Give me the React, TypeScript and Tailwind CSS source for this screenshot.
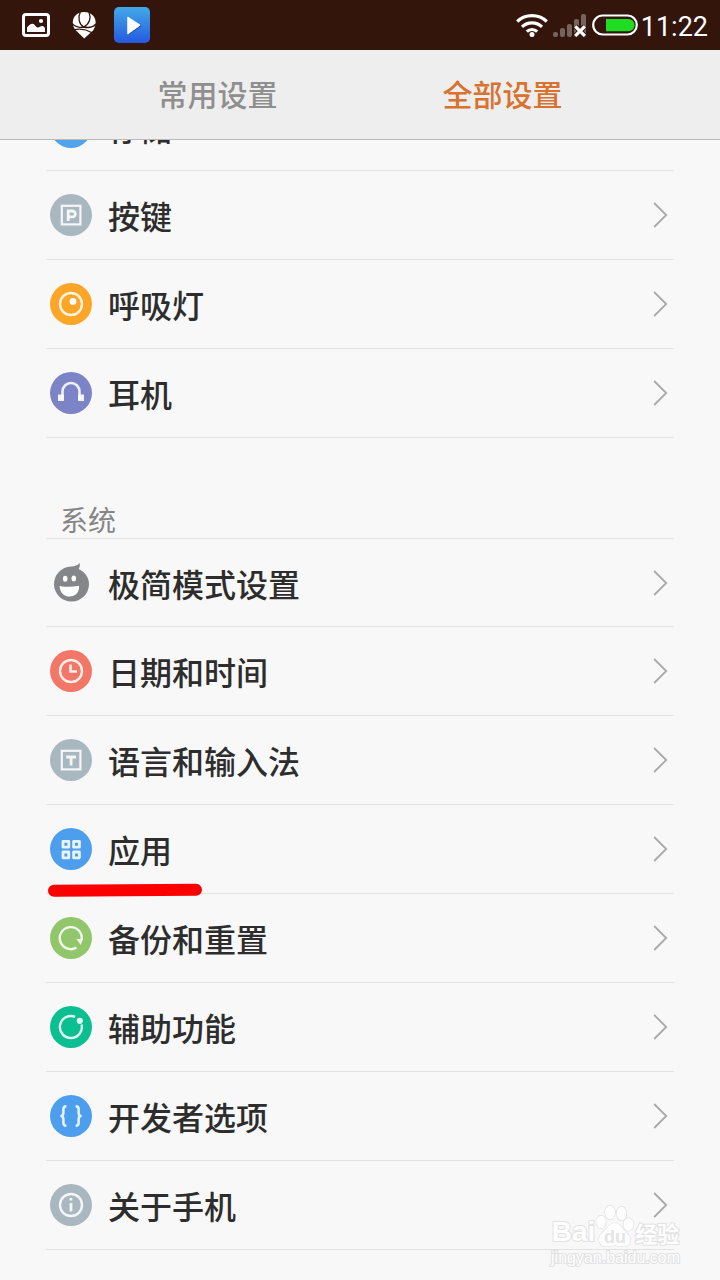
import type { ReactNode } from 'react'

type Item = {
  id: string
  label: string
  icon: ReactNode
  marked?: boolean
}

function Disc({ color, children }: { color: string; children?: ReactNode }) {
  return (
    <svg width="42" height="42" viewBox="0 0 42 42" fill="none" stroke="#fff" strokeOpacity="0.88" aria-hidden="true">
      <circle cx="21" cy="21" r="21" fill={color} stroke="none" />
      {children}
    </svg>
  )
}

const deviceItems: Item[] = [
  { id: 'storage', label: '存储', icon: <Disc color="#52a4ea" /> },
  {
    id: 'keys',
    label: '按键',
    icon: (
      <Disc color="#a9b7c1">
        <rect x="11.8" y="11.8" width="18.6" height="18.6" strokeWidth="2.2" />
        <path d="M18.2 27V17h4.2a2.9 2.9 0 0 1 0 5.9h-4" strokeWidth="2.8" />
      </Disc>
    ),
  },
  {
    id: 'light',
    label: '呼吸灯',
    icon: (
      <Disc color="#fba626">
        <circle cx="21" cy="21" r="11" strokeWidth="2.4" />
        <circle cx="23" cy="18.4" r="3.4" fill="#fff" stroke="none" />
      </Disc>
    ),
  },
  {
    id: 'headset',
    label: '耳机',
    icon: (
      <Disc color="#7c83c6">
        <path d="M12.5 28.4V19.5a8.5 8.5 0 0 1 17 0v8.9" strokeWidth="2.6" />
        <path d="M8 22.6h3V29H8zM11.2 22.6h2.6V29h-2.6zM28.2 22.6h2.6V29h-2.6zM31 22.6h3V29h-3z" fill="#fff" fillOpacity="0.9" stroke="none" />
      </Disc>
    ),
  },
]

const systemItems: Item[] = [
  {
    id: 'simple',
    label: '极简模式设置',
    icon: (
      <svg width="42" height="42" viewBox="0 0 42 42" aria-hidden="true">
        <path d="M29.6 1c.6 2.6 0 4.6-.9 6C34.6 9.7 39 15.3 39 22A17.500 17.500 0 1 1 21 4.600c4-.1 6.800-1.300 8.600-3.600z" fill="#848689" />
        <ellipse cx="15.2" cy="16.8" rx="2.300" ry="3" fill="#fff" />
        <ellipse cx="23.800" cy="16.600" rx="2.300" ry="3" fill="#fff" />
        <path d="M9.600 23.900c6.200 1.200 12.800 1.200 19.400-.2.800 6.400-3.600 10.700-9.300 10.800-5.500.1-9.900-4.100-10.100-10.600z" fill="#fff" />
      </svg>
    ),
  },
  {
    id: 'date',
    label: '日期和时间',
    icon: (
      <Disc color="#f27766">
        <circle cx="21" cy="21" r="11" strokeWidth="2.4" />
        <path d="M20.500 14.500v7h6.500" strokeWidth="2.600" />
      </Disc>
    ),
  },
  {
    id: 'language',
    label: '语言和输入法',
    icon: (
      <Disc color="#a9b7c1">
        <rect x="11.8" y="11.8" width="18.6" height="18.6" strokeWidth="2.2" />
        <path d="M16.200 18h9.800M21.100 18v8.400" strokeWidth="2.800" />
      </Disc>
    ),
  },
  {
    id: 'apps',
    label: '应用',
    marked: true,
    icon: (
      <Disc color="#4d9fee">
        <g strokeWidth="2.800" strokeLinejoin="round">
          <rect x="13" y="13.400" width="5.800" height="5.800" />
          <rect x="23.600" y="13.400" width="5.800" height="5.800" />
          <rect x="13" y="24" width="5.800" height="5.800" />
          <rect x="23.600" y="24" width="5.800" height="5.800" />
        </g>
      </Disc>
    ),
  },
  {
    id: 'backup',
    label: '备份和重置',
    icon: (
      <Disc color="#91c66b">
        <path d="M26.500 30.500A11 11 0 1 1 31.600 23" strokeWidth="2.400" />
        <path d="M26.200 21.800l6.600.4-2 5.800z" fill="#fff" fillOpacity="0.880" stroke="none" />
      </Disc>
    ),
  },
  {
    id: 'access',
    label: '辅助功能',
    icon: (
      <Disc color="#0cbf91">
        <path d="M25.200 10.900A11 11 0 1 0 31.600 18.500" strokeWidth="2.400" />
        <circle cx="29.800" cy="14.800" r="3.100" fill="#fff" fillOpacity="0.880" stroke="none" />
      </Disc>
    ),
  },
  {
    id: 'developer',
    label: '开发者选项',
    icon: (
      <Disc color="#4d9fee">
        <path d="M16.400 11.200c-2.200 0-3 .9-3 2.800v3.600c0 1.700-.5 2.900-1.900 3.400 1.400.5 1.900 1.700 1.900 3.400V28c0 1.900.8 2.800 3 2.800M25.600 11.200c2.200 0 3 .9 3 2.800v3.600c0 1.700.5 2.900 1.900 3.400-1.400.5-1.900 1.700-1.900 3.400V28c0 1.900-.8 2.800-3 2.800" strokeWidth="2.500" strokeLinejoin="round" />
      </Disc>
    ),
  },
  {
    id: 'about',
    label: '关于手机',
    icon: (
      <Disc color="#a9b7c1">
        <circle cx="21" cy="21" r="11" strokeWidth="2.4" />
        <path d="M21 14v2.600M21 19v8.500" strokeWidth="2.800" />
      </Disc>
    ),
  },
]

function StatusBar() {
  return (
    <div className="flex h-[50px] items-center justify-between bg-[#33150c] pl-[21px] pr-3">
      <div className="flex items-center gap-5">
        <svg width="30" height="26" viewBox="0 0 30 26" aria-hidden="true">
          <rect x="2.500" y="2.500" width="25" height="21" rx="2.500" fill="none" stroke="#fff" strokeWidth="3" />
          <path d="M6 20v-4.500c2-2.800 4-4 5.600-3.800 2.200.2 3 3.400 5 3.800 1.600.3 3-1.700 4.700-1.500 1.300.1 2.200 1.100 2.700 2.200V20z" fill="#fff" />
          <circle cx="20" cy="9" r="2.100" fill="#fff" />
        </svg>
        <svg width="26" height="28" viewBox="0 0 26 28" aria-hidden="true">
          <path d="M13 1C19.800 1 24.600 5.500 24.600 11.500c0 3.200-1.200 5.500-2.600 8L13.200 27.500 5 19.600C2.900 17.200 1.800 14.500 1.800 11.500 1.800 5.500 6.500 1 13 1z" fill="#fff" />
          <path d="M9.300 1C6.500 6.500 8 13.300 12.800 16M18 1.500c2.500 5.500.3 11.800-5.200 14.500M1 12.500c3.500 3.400 7.500 4.600 11.800 3.500M12.800 16c5 1.200 9.200.2 12-3M2.500 19c6-1.700 12.500-.8 18.500 2.700" fill="none" stroke="#33150c" strokeWidth="1.300" />
        </svg>
        <svg width="36" height="36" viewBox="0 0 36 36" className="-ml-[3px]" aria-hidden="true">
          <defs>
            <linearGradient id="player" x1="0" y1="0" x2="0" y2="1">
              <stop offset="0" stopColor="#44a9e8" />
              <stop offset="1" stopColor="#2459e0" />
            </linearGradient>
          </defs>
          <rect width="36" height="36" rx="5" fill="url(#player)" />
          <path d="M15 11.500l12.500 7.700-12.500 8.600z" fill="#1c55bd" />
          <path d="M14 10.500l11.500 7.700L14 26.500z" fill="#fff" stroke="#fff" strokeWidth="1.500" strokeLinejoin="round" />
        </svg>
      </div>
      <div className="flex items-center gap-[5px]">
        <svg width="32" height="26" viewBox="0 0 32 26" fill="none" stroke="#fff" strokeWidth="3.200" aria-hidden="true">
          <path d="M1.200 9.500a21.500 21.500 0 0 1 29.600 0M6 14.800a14.500 14.500 0 0 1 20 0M10.800 19.600a7.500 7.500 0 0 1 10.400 0" />
          <circle cx="16" cy="22.600" r="2.500" fill="#fff" stroke="none" />
        </svg>
        <svg width="34" height="24" viewBox="0 0 34 24" aria-hidden="true">
          <g fill="#75635d">
            <rect x="0" y="19" width="5" height="5" rx="2" />
            <rect x="7" y="15" width="5" height="9" rx="2" />
            <rect x="14" y="11" width="5" height="13" rx="2" />
            <rect x="21" y="6" width="5" height="18" rx="2" />
            <rect x="28" y="1" width="5" height="23" rx="2" />
          </g>
          <path d="M22.300 13.300l9.500 9.500M31.800 13.300l-9.500 9.500" stroke="#33150c" strokeWidth="5" />
          <path d="M22.300 13.300l9.500 9.500M31.800 13.300l-9.500 9.500" stroke="#fff" strokeWidth="3.200" />
        </svg>
        <svg width="46" height="24" viewBox="0 0 46 24" aria-hidden="true">
          <rect x="1.200" y="2.500" width="43.600" height="19" rx="9.500" fill="none" stroke="#fff" strokeWidth="2.200" />
          <path d="M14 6h22.500a6 6 0 0 1 0 12.200H14z" fill="#1fdd22" />
        </svg>
        <time className="-ml-[2px] pt-1 font-[Roboto,sans-serif] text-[27px] leading-8 text-white">11:22</time>
      </div>
    </div>
  )
}

function SettingRow({ item }: { item: Item }) {
  return (
    <li className="relative h-[89px] border-b border-[#e2e2e2] first:border-t">
      <a href={`#${item.id}`} className="flex h-full items-center gap-4 pl-1 pr-[6px]">
        {item.icon}
        <span className="flex-1 text-[32px] font-medium leading-10 text-[#2d2d2d]">{item.label}</span>
        <svg width="15" height="26" viewBox="0 0 15 26" fill="none" stroke="#a9a9a9" strokeWidth="1.800" aria-hidden="true">
          <path d="M1.200 1l12 12-12 12" />
        </svg>
      </a>
      {item.marked && (
        <svg width="156" height="14" viewBox="0 0 156 14" className="absolute -bottom-1 left-[1px]" aria-hidden="true">
          <path d="M7 7.800L149 6.800" stroke="#fb0000" strokeWidth="12" strokeLinecap="round" />
        </svg>
      )}
    </li>
  )
}

function Watermark() {
  return (
    <div className="pointer-events-none absolute bottom-3 right-10 flex flex-col items-center text-white opacity-90 [paint-order:stroke_fill] [-webkit-text-stroke:2px_#e0e0e0]">
      <div className="flex items-end">
        <span className="font-['Liberation_Sans',sans-serif] text-[28px] font-bold leading-8">Bai</span>
        <svg width="40" height="44" viewBox="0 0 40 44" fill="#fff" stroke="#dcdcdc" strokeWidth="1.200" aria-hidden="true">
          <ellipse cx="6" cy="18" rx="4.800" ry="6.300" />
          <ellipse cx="15" cy="8.500" rx="5" ry="6.800" />
          <ellipse cx="26.500" cy="9.500" rx="5" ry="6.800" />
          <ellipse cx="33.500" cy="20.500" rx="5" ry="6.300" />
          <path d="M20 19c4 0 6 3 8.500 6.500 3 3.500 7 6 7 10.500 0 4-3 6.500-7 6.500-3 0-5-1-8.500-1s-5.500 1-8.500 1c-4 0-7.500-2.500-7.500-7 0-4.500 4-7 7-10.500C13.500 22 16 19 20 19z" />
          <text x="20" y="39" textAnchor="middle" fontFamily="Liberation Sans, sans-serif" fontSize="18" fontWeight="700" fill="#e2e2e2" stroke="none">du</text>
        </svg>
        <span className="text-[22px] font-bold leading-8">经验</span>
      </div>
      <span className="font-['Liberation_Sans',sans-serif] text-base leading-5">jingyan.baidu.com</span>
    </div>
  )
}

export default function App() {
  return (
    <div className="relative min-h-screen overflow-hidden bg-[#f8f8f8] font-['Noto_Sans_CJK_SC',sans-serif]">
      <header className="relative z-10">
        <StatusBar />
        <nav className="flex h-[90px] items-center border-b border-[#b9b9b9] bg-[#eeeeee] px-[75px] pb-1 text-[30px] font-medium leading-10">
          <button type="button" className="flex-1 text-[#8f8f8f]">常用设置</button>
          <button type="button" className="flex-1 text-[#d9712f]">全部设置</button>
        </nav>
      </header>

      <main className="-mt-[58px] px-[46px]">
        <ul>
          {deviceItems.map(item => (
            <SettingRow key={item.id} item={item} />
          ))}
        </ul>
        <h2 className="flex h-[100px] items-end pl-[14px] text-[28px] leading-[38px] text-[#858585]">系统</h2>
        <ul>
          {systemItems.map(item => (
            <SettingRow key={item.id} item={item} />
          ))}
        </ul>
      </main>

      <Watermark />
    </div>
  )
}
